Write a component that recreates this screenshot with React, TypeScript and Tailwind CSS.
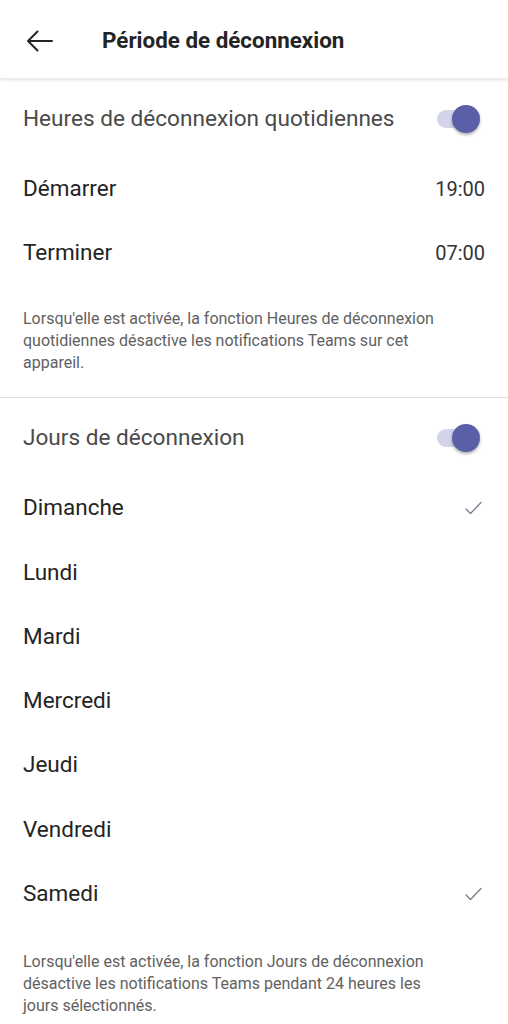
import React from "react";

const font = { fontFamily: "Roboto, 'Noto Sans', sans-serif" };

function Toggle() {
  return (
    <div className="relative w-[48px] h-[30px] flex items-center">
      <div className="ml-[3px] w-[40px] h-[18px] rounded-full bg-[#d3d4ea]" />
      <div className="absolute right-[2px] top-[1px] w-[28px] h-[28px] rounded-full bg-[#5b5fa8] shadow-[0_2px_3px_rgba(0,0,0,0.3)]" />
    </div>
  );
}

function Check() {
  return (
    <svg width="17" height="14" viewBox="0 0 17 14" fill="none">
      <path d="M1 8 L5.5 12.5 L16 1.5" stroke="#76768a" strokeWidth="1.2" strokeLinecap="round" strokeLinejoin="round" />
    </svg>
  );
}

const days: [string, boolean][] = [
  ["Dimanche", true],
  ["Lundi", false],
  ["Mardi", false],
  ["Mercredi", false],
  ["Jeudi", false],
  ["Vendredi", false],
  ["Samedi", true],
];

export default function App() {
  return (
    <div className="w-[508px] h-[1024px] bg-white overflow-hidden" style={font}>
      <div className="h-[79px] pt-[3px] flex items-center shadow-[0_1px_3px_rgba(0,0,0,0.12)] relative z-10 border-b border-[#ececec]">
        <div className="w-[102px] pl-[26px] flex items-center">
          <svg width="28" height="22" viewBox="0 0 28 22" fill="none">
            <path d="M2 11 H26 M11.5 1.5 L2 11 L11.5 20.5" stroke="#242424" strokeWidth="2" strokeLinecap="round" strokeLinejoin="round" />
          </svg>
        </div>
        <div className="text-[22.4px] font-bold text-[#242424]">Période de déconnexion</div>
      </div>

      <div className="h-[77px] pt-[2px] flex items-center justify-between pl-[23px] pr-[26px]">
        <div className="text-[22.6px] text-[#4a4a4a]">Heures de déconnexion quotidiennes</div>
        <Toggle />
      </div>
      <div className="h-[64px] pt-[2px] flex items-center justify-between pl-[23px] pr-[23px]">
        <div className="text-[22.5px] text-[#242424]">Démarrer</div>
        <div className="text-[20px] text-[#333333]">19:00</div>
      </div>
      <div className="h-[64px] pt-[2px] flex items-center justify-between pl-[23px] pr-[23px]">
        <div className="text-[22.5px] text-[#242424]">Terminer</div>
        <div className="text-[20px] text-[#333333]">07:00</div>
      </div>
      <div className="pt-[24px] pb-[23px] pl-[23px]">
        <div className="w-[445px] text-[16px] leading-[22px] text-[#616161]">
          Lorsqu'elle est activée, la fonction Heures de déconnexion quotidiennes désactive les notifications Teams sur cet appareil.
        </div>
      </div>
      <div className="h-px bg-[#e0e0e0]" />
      <div className="h-[78px] pt-[2px] flex items-center justify-between pl-[23px] pr-[26px]">
        <div className="text-[22.6px] text-[#4a4a4a]">Jours de déconnexion</div>
        <Toggle />
      </div>
      {days.map(([d, c]) => (
        <div key={d} className="h-[64.3px] flex items-center justify-between pl-[23px] pr-[26px]">
          <div className="text-[22.5px] text-[#242424]">{d}</div>
          {c && <Check />}
        </div>
      ))}
      <div className="pt-[25px] pl-[23px]">
        <div className="w-[436px] text-[16px] leading-[22px] text-[#616161]">
          Lorsqu'elle est activée, la fonction Jours de déconnexion désactive les notifications Teams pendant 24 heures les jours sélectionnés.
        </div>
      </div>
    </div>
  );
}
